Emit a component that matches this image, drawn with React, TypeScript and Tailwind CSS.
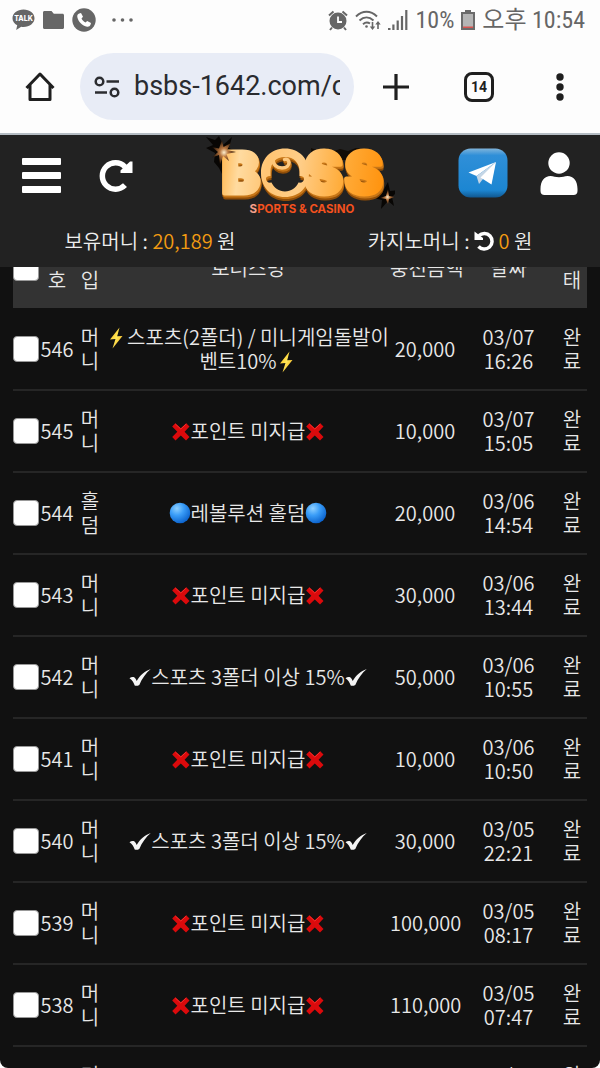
import React from "react";

const BODY_FONT = "font-['Noto_Sans_CJK_KR',sans-serif]";
const STATUS_FONT = "font-['Roboto_Condensed','Roboto','Noto_Sans_CJK_KR',sans-serif]";

type Bonus = "bolt" | "cross" | "ball" | "check";

interface Entry {
  id: number;
  type: string;
  mark: Bonus;
  amount: string;
  date: string;
  time: string;
}

const names: Record<Bonus, string> = {
  bolt: "스포츠(2폴더) / 미니게임돌발이벤트10%",
  cross: "포인트 미지급",
  ball: "레볼루션 홀덤",
  check: "스포츠 3폴더 이상 15%",
};

const entries: Entry[] = [
  { id: 546, type: "머니", mark: "bolt", amount: "20,000", date: "03/07", time: "16:26" },
  { id: 545, type: "머니", mark: "cross", amount: "10,000", date: "03/07", time: "15:05" },
  { id: 544, type: "홀덤", mark: "ball", amount: "20,000", date: "03/06", time: "14:54" },
  { id: 543, type: "머니", mark: "cross", amount: "30,000", date: "03/06", time: "13:44" },
  { id: 542, type: "머니", mark: "check", amount: "50,000", date: "03/06", time: "10:55" },
  { id: 541, type: "머니", mark: "cross", amount: "10,000", date: "03/06", time: "10:50" },
  { id: 540, type: "머니", mark: "check", amount: "30,000", date: "03/05", time: "22:21" },
  { id: 539, type: "머니", mark: "cross", amount: "100,000", date: "03/05", time: "08:17" },
  { id: 538, type: "머니", mark: "cross", amount: "110,000", date: "03/05", time: "07:47" },
  { id: 537, type: "머니", mark: "cross", amount: "10,000", date: "03/05", time: "07:12" },
];

function Mark({ kind }: { kind: Bonus }) {
  if (kind === "bolt")
    return (
      <svg viewBox="0 0 20 22" className="inline-block h-[22px] w-5 align-[-4px]" aria-hidden="true">
        <defs>
          <linearGradient id="boltFill" x1="0" y1="0" x2="1" y2="1">
            <stop offset="0" stopColor="#ffb300" />
            <stop offset="0.5" stopColor="#ffe85a" />
            <stop offset="1" stopColor="#f59a00" />
          </linearGradient>
        </defs>
        <path d="M12.500 0.500 3 12.500 8.500 12 5.500 21.500 15.500 9 10.200 9.200z" fill="url(#boltFill)" />
      </svg>
    );
  if (kind === "cross")
    return (
      <svg viewBox="0 0 20 20" className="inline-block h-5 w-5 align-[-3px]" aria-hidden="true">
        <path
          d="M1.200 4.500 4.300 1.200 9.800 6.200 15.200 1.200 18.500 4.500 13.600 9.700 18.500 15 15 18.500 9.800 13.500 4.500 18.500 1.200 15 6.300 9.700z"
          fill="#db0a0c"
        />
        <path d="M4.300 2 9.800 7l5.400-5" fill="none" stroke="#f5302c" strokeWidth="1" />
      </svg>
    );
  if (kind === "ball")
    return (
      <svg viewBox="0 0 22 22" className="inline-block h-[22px] w-[22px] align-[-3px]" aria-hidden="true">
        <defs>
          <radialGradient id="ballFill" cx="0.35" cy="0.28" r="0.75">
            <stop offset="0" stopColor="#8fd0ff" />
            <stop offset="0.45" stopColor="#3a9df8" />
            <stop offset="1" stopColor="#0b62cc" />
          </radialGradient>
        </defs>
        <circle cx="11" cy="11" r="10.300" fill="url(#ballFill)" />
      </svg>
    );
  return (
    <svg viewBox="0 0 22 20" className="inline-block h-5 w-[22px] align-[-3px]" aria-hidden="true">
      <path
        d="M0.500 10.200C2 9 4 8.600 5.500 9.500c1 .8 1.600 2.200 2.200 3.500C11 7.500 15.500 3.200 21.800 1 16.800 5.200 13 10.500 10.300 17c-1.600.9-3.400 1-4.600.6C4.800 14.800 3.300 11.800.5 10.200z"
        fill="#f4f4f4"
      />
    </svg>
  );
}

function StatusBar() {
  return (
    <div className={`flex h-10 shrink-0 items-center justify-between pr-[15px] pl-3 text-[#666] ${STATUS_FONT}`}>
      <div className="flex items-center gap-2">
        <svg viewBox="0 0 23 22" className="h-[22px] w-[23px]">
          <path d="M11.500.5C5.300.5.5 4.300.5 9.200c0 3 1.800 5.600 4.700 7.100L4.200 21l5-3.300c.8.1 1.500.2 2.300.2 6.200 0 11-3.900 11-8.700S17.700.5 11.500.5z" fill="#666" />
          <text x="11.500" y="12" textAnchor="middle" fontSize="7" fontWeight="800" fontFamily="Inter" fill="#fff">TALK</text>
        </svg>
        <svg viewBox="0 0 21 18" className="h-[18px] w-[21px]">
          <path d="M0 1.500C0 .6.6 0 1.500 0h7l2.300 2.700h8.700c.9 0 1.500.6 1.500 1.500v12.300c0 .9-.6 1.500-1.500 1.500h-18C.6 18 0 17.400 0 16.500z" fill="#666" />
        </svg>
        <svg viewBox="0 0 24 24" className="h-6 w-6">
          <circle cx="12" cy="12" r="11.700" fill="#666" />
          <path d="M7.200 5.500 9 5l2 3.800-1.500 1.700c.8 1.800 2.200 3.200 4 4l1.700-1.500 3.800 2-.5 1.800c-.5 1.400-1.800 2.200-3.400 1.900C10.300 17.700 6.300 13.700 5.300 8.900c-.3-1.600.5-2.900 1.900-3.400z" fill="#fff" />
        </svg>
        <svg viewBox="0 0 22 4" className="ml-2 h-1 w-[22px]">
          <circle cx="2" cy="2" r="1.800" fill="#666" />
          <circle cx="10.500" cy="2" r="1.800" fill="#666" />
          <circle cx="19" cy="2" r="1.800" fill="#666" />
        </svg>
      </div>
      <div className="flex items-center gap-[7px] text-2xl">
        <svg viewBox="0 0 20 21" className="h-[21px] w-5">
          <circle cx="10" cy="11" r="8.500" fill="#666" />
          <path d="M1 5.500 5.500 1.500M19 5.500l-4.500-4M4 17.500 2 20M16 17.500l2 2.500" stroke="#666" strokeWidth="2" />
          <path d="M10 6.500V12h4" fill="none" stroke="#fff" strokeWidth="1.800" />
        </svg>
        <svg viewBox="0 0 26 21" className="h-[21px] w-[26px]" fill="none" stroke="#666" strokeWidth="1.900">
          <path d="M1 6.500C7.500.2 15.500.2 22 6.500M4.500 10.500c4.300-4 9.700-4 14 0M8 14.200c2.200-2 4.800-2.200 7-.6" />
          <circle cx="11.500" cy="16.500" r="1.300" fill="#666" stroke="none" />
          <path d="M17.500 12v5.500M23 19v-5.500" strokeWidth="1.600" />
          <path d="m14.800 16.500 2.700 3.500 2.700-3.500zM20.300 14.500 23 11l2.700 3.500z" fill="#666" stroke="none" />
        </svg>
        <svg viewBox="0 0 20 20" className="h-5 w-5" fill="#666">
          <path d="M0 18h2.500v2H0zM4.300 14.500h2.200V20H4.300zM8.600 10.500h2.200V20H8.600zM12.900 6h2.200v14h-2.200zM17.200 0h2.200v20h-2.200z" />
        </svg>
        <span>10%</span>
        <svg viewBox="0 0 14 20" className="h-5 w-3.5">
          <path d="M4 0h6v2h4v18H0V2h4z" fill="#6b6b6b" />
          <path d="M2 4h10v13H2z" fill="#b5b5b5" />
          <path d="M2 16.500h10V18H2z" fill="#d9534f" />
        </svg>
        <span>오후 10:54</span>
      </div>
    </div>
  );
}

function BrowserBar() {
  return (
    <div className="flex h-[95px] shrink-0 items-center border-b-2 border-[#b4bcc3] text-[#1f1f1f]">
      <button aria-label="홈" className="flex w-20 items-center justify-center">
        <svg viewBox="0 0 30 31" className="h-[31px] w-[30px]" fill="none" stroke="#1f1f1f" strokeWidth="3">
          <path d="M1.500 17 15 3l13.500 14M5 14v14.500h20V14" strokeLinejoin="round" />
        </svg>
      </button>
      <div className="flex h-[67px] min-w-0 flex-1 items-center gap-3.5 rounded-full bg-[#e8ecf6] pr-3.5 pl-3.5">
        <svg viewBox="0 0 26 22" className="h-[22px] w-[26px] shrink-0" fill="none" stroke="#2b2c30" strokeWidth="2.500">
          <circle cx="5.500" cy="5.500" r="3.800" />
          <path d="M12.500 5.500H25M1 16.500h12" />
          <circle cx="20.500" cy="16.500" r="3.800" />
        </svg>
        <input
          aria-label="주소"
          readOnly
          value="bsbs-1642.com/cash"
          className="min-w-0 flex-1 bg-transparent font-['Roboto',sans-serif] text-[27px] text-[#2a2b2f] outline-none"
        />
      </div>
      <button aria-label="새 탭" className="flex w-[84px] justify-center">
        <svg viewBox="0 0 26 26" className="h-[26px] w-[26px]" stroke="#1f1f1f" strokeWidth="3.200">
          <path d="M13 0v26M0 13h26" />
        </svg>
      </button>
      <button aria-label="탭" className="flex w-[82px] justify-center">
        <span className="flex size-[30px] items-center justify-center rounded-lg border-3 border-[#1f1f1f] font-['Roboto',sans-serif] text-sm font-bold">
          14
        </span>
      </button>
      <button aria-label="메뉴" className="flex w-20 justify-center">
        <svg viewBox="0 0 8 28" className="h-7 w-2" fill="#1f1f1f">
          <circle cx="4" cy="4" r="3.700" />
          <circle cx="4" cy="14" r="3.700" />
          <circle cx="4" cy="24" r="3.700" />
        </svg>
      </button>
    </div>
  );
}

function Logo() {
  return (
    <svg viewBox="0 0 190 80" className="h-20 w-[190px]" role="img" aria-label="BOSS">
      <defs>
        <linearGradient id="gold" gradientUnits="userSpaceOnUse" x1="16" y1="0" x2="180" y2="20">
          <stop offset="0" stopColor="#ffb347" />
          <stop offset="0.13" stopColor="#ffdba0" />
          <stop offset="0.3" stopColor="#ffc574" />
          <stop offset="0.5" stopColor="#ffcd87" />
          <stop offset="0.75" stopColor="#ffad3c" />
          <stop offset="1" stopColor="#ff9410" />
        </linearGradient>
        <radialGradient id="spark">
          <stop offset="0" stopColor="#fff0cf" />
          <stop offset="0.35" stopColor="#b8763f" />
          <stop offset="1" stopColor="#1c0f07" />
        </radialGradient>
      </defs>
      <path d="m14 1 4 9 9-8-3 11 10 5-10 5 0 14-6 4-4-8-5-6 1-9-9-5 7-3-7-8 9 3z" fill="#080604" />
      <path d="m183 47 2 9 9-1-7 7 2 9-6-5-7 8 1-9-8-2 8-5z" fill="#080604" />
      <path d="m106 13 8 3 8-3 4 4 9-3 8 2 8-3 12 2 4 10h-60z" fill="#120c06" />
      <g
        className="[filter:drop-shadow(1px_2px_0_#c77617)_drop-shadow(0_2px_0_#8f4d08)]"
        fill="url(#gold)"
        stroke="url(#gold)"
        strokeWidth="5"
        strokeLinejoin="round"
        fontFamily="Inter"
        fontWeight="900"
        fontSize="56"
      >
        <text x="17" y="58">B</text>
        <text x="100" y="58">S</text>
        <text x="140" y="58">S</text>
        <path
          fillRule="evenodd"
          stroke="none"
          d="M80 13.500c14 0 24 10 24 24.500S94 62 80 62 56 52.500 56 38 66 13.500 80 13.500zM80 22c-9 0-14.500 6-14.500 14.500v4.500c-3.500 0-5 1.500-4.500 3.500.5 2.500 2.500 3.500 5.500 3 2.500 5.500 7.500 9 13.500 9s11-3.500 13.500-9c3 .5 5-.5 5.500-3 .5-2-1-3.500-4.500-3.500v-4.500C94.500 28 89 22 80 22z"
        />
        <path d="M68 24c0 6 4 9 9 9 4.500 0 7-2.500 7-5.500 0-2.500-2.500-4-4.500-3" fill="none" strokeWidth="3.500" strokeLinecap="round" />
      </g>
      <path d="m17 5 1.500 7L26 8l-4 7 9 2-9.500 2 2.500 7-6-5-3 9-1-10-7 2.500 6-5.500-6-5 7 1.500z" fill="url(#spark)" />
      <path d="m183 54 1 7 6 1-6 2-1 6-2-6-6-1 6-2z" fill="url(#spark)" />
      <text x="97" y="78" textAnchor="middle" fontFamily="Inter" fontWeight="700" fontSize="11.500" fill="#f4511e">
        <tspan fill="#f7a08a">S</tspan>PORTS &amp; CASINO
      </text>
    </svg>
  );
}

function SiteHeader() {
  return (
    <header className="relative z-10 shrink-0 bg-[#222]">
      <div className="grid h-20 grid-cols-[1fr_auto_1fr] items-center px-[22px]">
        <div className="flex items-center gap-[38px]">
          <button aria-label="메뉴 열기">
            <svg viewBox="0 0 39 35" className="h-[35px] w-[39px]" fill="#fff">
              <rect width="39" height="7" rx="1" />
              <rect y="14" width="39" height="7" rx="1" />
              <rect y="28" width="39" height="7" rx="1" />
            </svg>
          </button>
          <button aria-label="새로고침">
            <svg viewBox="0 0 34 34" className="h-[34px] w-[34px]">
              <path d="M26 27.200A13.200 13.200 0 1 1 26 8.800" fill="none" stroke="#fff" strokeWidth="5.500" />
              <path d="M33.500 3.500V15H21.500V12.500L31 3.500z" fill="#fff" />
            </svg>
          </button>
        </div>
        <Logo />
        <div className="flex items-center justify-end gap-8 pb-1">
          <a href="#telegram" aria-label="텔레그램">
            <svg viewBox="0 0 50 50" className="size-[50px]">
              <defs>
                <linearGradient id="tg" x1="0" y1="0" x2="0" y2="1">
                  <stop offset="0" stopColor="#7fb4dc" />
                  <stop offset="0.14" stopColor="#2f8fd8" />
                  <stop offset="0.85" stopColor="#1c86d2" />
                  <stop offset="1" stopColor="#11578f" />
                </linearGradient>
              </defs>
              <rect x="0.500" y="0.500" width="49" height="49" rx="12" fill="url(#tg)" />
              <path d="M38 14 10.500 24.500l8 3.500z" fill="#fff" />
              <path d="M38 14 18.500 28l2.500 8 4-5z" fill="#c4d6e6" />
              <path d="M38 14 22.500 29.500 33.500 36.500z" fill="#fff" />
            </svg>
          </a>
          <button aria-label="내 정보">
            <svg viewBox="0 0 38 43" className="h-[43px] w-[38px]" fill="#fff">
              <circle cx="19" cy="11" r="10.700" />
              <path d="M0.500 37c0-8 4-13 10-13 3 0 5 1.300 8.500 1.300S24.500 24 27.500 24c6 0 10 5 10 13v2c0 2.500-1.500 4-4 4h-29c-2.500 0-4-1.500-4-4z" />
            </svg>
          </button>
        </div>
      </div>
      <div className="grid h-[52px] grid-cols-2 items-center text-center text-xl font-[350] text-[#eee]">
        <p>
          보유머니 : <span className="text-[#f39c12]">20,189</span> 원
        </p>
        <p>
          카지노머니 :{" "}
          <svg viewBox="0 0 20 20" className="inline-block size-5 align-[-2px]">
            <path d="M5 4.500A7.800 7.800 0 1 1 4.500 15.500" fill="none" stroke="#fff" strokeWidth="3.500" />
            <path d="M0.500 0.500V9H9V7z" fill="#fff" />
          </svg>{" "}
          <span className="text-[#f39c12]">0</span> 원
        </p>
      </div>
    </header>
  );
}

function Tick({ label }: { label: string }) {
  return (
    <input
      type="checkbox"
      aria-label={label}
      className="block size-[26px] appearance-none rounded-sm border border-[#999] bg-white"
    />
  );
}

function BonusTable() {
  return (
    <main className="min-h-0 flex-1 overflow-hidden px-[13px]">
      <table className="-mt-10 w-full table-fixed border-collapse text-center text-xl leading-6 font-[350] text-[#e8e8e8]">
        <colgroup>
          <col className="w-[27px]" />
          <col className="w-[34px]" />
          <col className="w-8" />
          <col />
          <col className="w-[70px]" />
          <col className="w-[97px]" />
          <col className="w-[30px]" />
        </colgroup>
        <thead className="bg-[#333]">
          <tr className="h-[81px] *:p-0 *:font-[350]">
            <th><Tick label="전체 선택" /></th>
            <th>번<br />호</th>
            <th>타<br />입</th>
            <th>보너스명</th>
            <th className="whitespace-nowrap">충전금액</th>
            <th>날짜</th>
            <th>상<br />태</th>
          </tr>
        </thead>
        <tbody>
          {entries.map((e) => (
            <tr key={e.id} className="h-[82px] border-b-2 border-[#262626] *:p-0">
              <td><Tick label={`${e.id} 선택`} /></td>
              <td>{e.id}</td>
              <td>{e.type[0]}<br />{e.type[1]}</td>
              <td className="break-all">
                <Mark kind={e.mark} />
                {names[e.mark]}
                <Mark kind={e.mark} />
              </td>
              <td className="whitespace-nowrap">{e.amount}</td>
              <td>{e.date}<br />{e.time}</td>
              <td>완<br />료</td>
            </tr>
          ))}
        </tbody>
      </table>
    </main>
  );
}

export default function App() {
  return (
    <div className="h-screen bg-white">
      <div className={`flex h-full flex-col overflow-hidden rounded-b-lg bg-[#111] ${BODY_FONT}`}>
        <div className="shrink-0 bg-[#fdfdfd]">
          <StatusBar />
          <BrowserBar />
        </div>
        <SiteHeader />
        <BonusTable />
      </div>
    </div>
  );
}
